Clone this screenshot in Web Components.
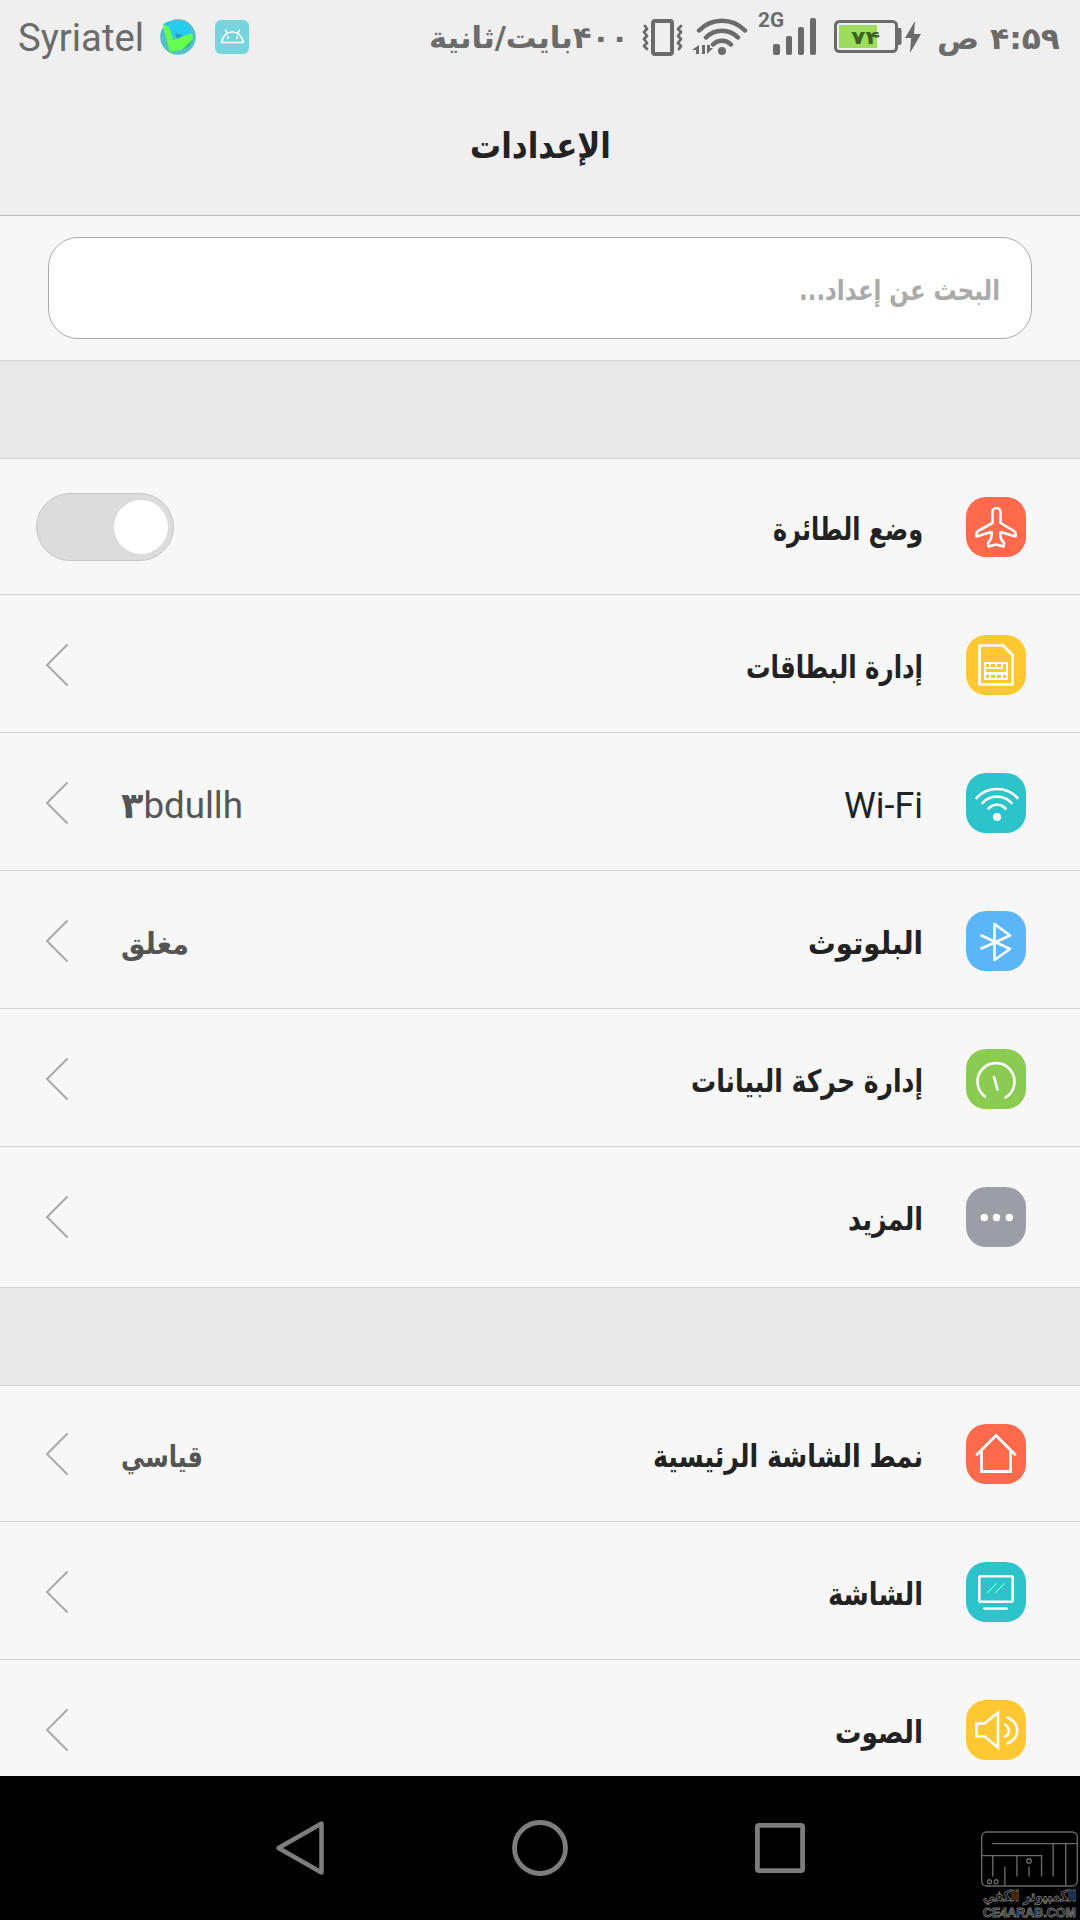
<!DOCTYPE html>
<html lang="ar">
<head>
<meta charset="utf-8">
<title>الإعدادات</title>
<style>
html,body{margin:0;padding:0}
body{width:1080px;height:1920px;overflow:hidden;background:#f7f7f7;font-family:"DejaVu Sans","Roboto",sans-serif;color:#222}
</style>
</head>
<body>
<settings-app></settings-app>
<script>
const define = (name, html, setup) => {
  const t = document.createElement('template');
  t.innerHTML = html;
  customElements.define(name, class extends HTMLElement {
    connectedCallback() {
      if (this.shadowRoot) return;
      this.attachShadow({mode: 'open'}).append(t.content.cloneNode(true));
      if (setup) setup(this, this.shadowRoot);
    }
  });
};

/* Text squeezed or stretched to a set width, as a condensed face would be */
define('fit-text', `<style>
:host{display:block;flex:none;white-space:nowrap;line-height:1.2}
span{display:inline-block;transform-origin:0 50%}
</style><span><slot></slot></span>`, (el, root) => {
  const w = +el.getAttribute('w'), s = root.querySelector('span');
  el.style.width = w + 'px';
  el.style.direction = 'ltr';
  s.style.direction = el.getAttribute('dir') || 'rtl';
  s.style.transform = 'scaleX(' + w / s.getBoundingClientRect().width + ')';
});

const W = 'fill="none" stroke="#fff" stroke-width="2.6" stroke-linecap="round" stroke-linejoin="round"';
const ICONS = {
  plane: ['#ff6a4d', `<path ${W} d="M30 11c-2 0-3.500 2-3.500 4v11L12 34c-1.500 1-2 3-1.500 5.500l15-4.500c.5 5 0 8-3.500 10.500l.5 4 7.500-2 7.500 2 .5-4c-3.500-2.500-4-5.500-3.500-10.500l15 4.500c.5-2.500 0-4.500-1.500-5.500L34.500 26V15c0-2-1.500-4-4.500-4z"/>`],
  sim: ['#ffc732', `<path fill="none" stroke="#fff" stroke-width="2.700" stroke-linejoin="round" d="M13.500 10.500H37l9.500 9.500v29.500h-33z"/><path fill="#fff" d="M18 27h24v18H18z"/><path fill="#ffc732" d="M20 29h3v3h-3zm5 0h4v3h-4zm6 0h4v3h-4zm6 0h3v8H20v-3h17zM20 40h3v3h-3zm5 0h4v3h-4zm6 0h4v3h-4zm6 0h3v3h-3z"/>`],
  wifi: ['#2cc3cb', `<g ${W}><path d="M10.500 25C21 13 41 13 51.500 25M16.500 30C24 21.500 38 21.500 45.500 30M22.500 35.500c5-5 12-5 17 0"/></g><circle cx="31" cy="44" r="4" fill="#fff"/>`],
  bluetooth: ['#5bb6f8', `<path ${W} d="M15.500 24.500 44 38 28.500 49V13L44 24.500 15.500 37.500"/>`],
  data: ['#8acc52', `<path ${W} d="M19 47.500a18.500 18.500 0 1 1 20.500 1M28 28l3.500 12.500"/>`],
  more: ['#9d9da5', `<g fill="#fff"><circle cx="18.300" cy="30.500" r="3.700"/><circle cx="30.500" cy="30.500" r="3.700"/><circle cx="43.300" cy="30.500" r="3.700"/></g>`],
  home: ['#ff6a4d', `<path fill="none" stroke="#fff" stroke-width="2.800" stroke-linecap="round" d="M11 30.500 30 11.500l19 19M15.500 27v20.500h29V27"/>`],
  screen: ['#2cc3cb', `<rect x="13.300" y="14.300" width="33.400" height="25.400" rx="1.500" ${W}/><path ${W} d="M18.500 46.500h22"/><path stroke="#fff" stroke-width="1" d="M21 31l10-10M29 31l10-10"/>`],
  sound: ['#ffc732', `<g ${W}><path stroke-linejoin="miter" d="M10.500 23.500h8L32 12.500v35L18.500 36.500h-8z"/><path d="M39 24.500c5 3 5 10 0 12M41.500 17.500c13 6 13 20 0 26"/></g>`]
};
define('app-icon', `<style>
:host{display:block;flex:none;width:60px;height:60px;border-radius:20px;overflow:hidden}
svg{display:block}
</style><svg width="60" height="60" viewBox="0 0 60 60"></svg>`, (el, root) => {
  const [bg, art] = ICONS[el.getAttribute('name')];
  el.style.background = bg;
  root.querySelector('svg').innerHTML = art;
});

define('toggle-switch', `<style>
:host{display:flex;flex:none;box-sizing:border-box;width:138px;height:68px;border:1px solid #c6c6c6;border-radius:34px;background:#dcdcdc;align-items:center;justify-content:flex-end;direction:ltr;padding-right:5px}
i{width:54px;height:54px;border-radius:50%;background:#fff}
</style><i></i>`);

define('chevron-mark', `<style>:host{display:block;flex:none}svg{display:block}</style>
<svg width="24" height="44" viewBox="0 0 24 44"><path fill="none" stroke="#aaa" stroke-width="2" d="M22.500 1.500 2 22l20.500 20.500"/></svg>`);

define('setting-row', `<style>
:host{display:flex;direction:rtl;box-sizing:border-box;height:138px;padding:3px 54px 0 45px;align-items:center;border-bottom:1px solid #d4d4d4;background:#f7f7f7}
:host([first]){height:136px;padding-top:2px;padding-bottom:1px}
:host([last]){height:141px;padding-top:1px;padding-bottom:1px}
.label{margin-right:43px;flex:1}
.value{margin-left:52px;color:#555}
</style><div class="label"><slot></slot></div><div class="value"><slot name="value"></slot></div><slot name="end"><chevron-mark></chevron-mark></slot>`,
(el, root) => {
  const icon = document.createElement('app-icon');
  icon.setAttribute('name', el.getAttribute('icon'));
  root.querySelector('.label').before(icon);
});

define('status-bar', `<style>
:host{display:flex;height:74px;box-sizing:border-box;padding:0 20px 0 18px;align-items:center;color:#6b6b6b}
svg{display:block;flex:none}
.gap{flex:1}
.carrier{font:38px/44px Roboto;padding-top:1px}
.speed{font-size:30px;font-weight:bold;margin-right:13px;padding-top:2px}
.time{font-size:30px;font-weight:bold;padding-top:3px}
.net{width:60px;height:74px;margin:0 17px 0 9px;display:grid}
.net>*{grid-area:1/1}
.net fit-text{font:bold 20px/20px Roboto;padding:10px 0 0 1px}
.bat{display:grid;margin-right:2px;align-items:center}
.bat>*{grid-area:1/1}
.bat fit-text{font-size:19px;font-weight:bold;color:#3c6420;margin-left:17px;padding-top:1px}
</style>
<fit-text class="carrier" w="126" dir="ltr">Syriatel</fit-text>
<svg width="36" height="36" viewBox="0 0 36 36" style="margin-left:16px"><circle cx="18" cy="18" r="17.800" fill="#54bfca"/><path fill="#25ccf0" d="M3 5 8 2.500 26 2.500l6.500 12.500-9 2-8-3-4 9z"/><path fill="#66ff4f" d="M2.500 5 9 8l4.500 13 18.500-7 1 7-11 10-12 1.500z"/><path fill="#28bc86" d="m33 20-3 7-8 4z"/><path fill="#249aca" d="m15 14 8 2-6 4z"/></svg>
<svg width="34" height="34" viewBox="0 0 34 34" style="margin-left:19px"><rect width="34" height="34" rx="6" fill="#76d5dc"/><path fill="none" stroke="#fff" stroke-width="1.500" stroke-linejoin="round" stroke-linecap="round" d="M6.500 22.500c2-14 19-14 22 0zM12 13l-1.500-3M23 13l1.500-3"/><path fill="#fff" d="M12 16h2v3h-2zm9 0h2v3h-2z"/></svg>
<div class="gap"></div>
<fit-text class="speed" w="200">۴۰۰بايت/ثانية</fit-text>
<svg width="42" height="37" viewBox="0 0 42 37"><rect x="11" y="2" width="19" height="33" rx="2" fill="none" stroke="#6b6b6b" stroke-width="4"/><path fill="none" stroke="#6b6b6b" stroke-width="2.800" stroke-linejoin="round" stroke-linecap="round" d="M3 7l2 3-3 3 3 4-3 3 3 4-3 3 3 3M39 7l-3 3 3 3-3 4 3 3-3 4 3 3-2 3"/></svg>
<svg width="56" height="38" viewBox="0 0 56 38" style="margin-left:8px"><g fill="none" stroke="#6b6b6b" stroke-width="4.500" stroke-linecap="round"><path d="M7 12.500c13-13 33-13 46 0M14 19.500c9-9 23-9 32 0M21 26.500c5-5 13-5 18 0"/></g><circle cx="30" cy="33" r="4" fill="#6b6b6b"/><path fill="#6b6b6b" d="M0 32l7-5v9H4v-4zm10-5v9h3v-9h-3zm5-0v9l6-6h-3v-3z"/></svg>
<div class="net"><fit-text w="26" dir="ltr">2G</fit-text><svg width="60" height="74" viewBox="0 0 60 74"><g fill="#6b6b6b"><rect x="16" y="44" width="7" height="11" rx="2"/><rect x="29" y="36" width="6" height="19" rx="2"/><rect x="41" y="27" width="6" height="28" rx="2"/><rect x="53" y="18" width="6" height="37" rx="2"/></g></svg></div>
<div class="bat"><svg width="68" height="34" viewBox="0 0 68 34"><path fill="#9ddc5c" d="M5 5h38v23H5z"/><rect x="1.500" y="1.500" width="61" height="30" rx="4" fill="none" stroke="#6b6b6b" stroke-width="3"/><path fill="#6b6b6b" d="M63 8h3q1.500 0 1.500 2v13q0 2-1.500 2h-3z"/></svg><fit-text w="29">۷۴</fit-text></div>
<svg width="18" height="34" viewBox="0 0 18 34"><path fill="#6b6b6b" d="M11 1 1 18h6l-1 15L17 14h-7z"/></svg>
<fit-text class="time" w="123" style="margin-left:15px">۴:۵۹ ص</fit-text>`);

define('title-bar', `<style>
:host{display:flex;flex:1;justify-content:center;align-items:flex-start;padding-top:50px;font-size:36px;font-weight:bold}
</style><slot></slot>`);

define('search-box', `<style>
:host{display:flex;height:145px;box-sizing:border-box;align-items:center;padding:0 48px 1px;border-bottom:1px solid #d4d4d4;background:#f7f7f7}
div{box-sizing:border-box;height:102px;flex:1;border:1px solid #aaa;border-radius:30px;background:#fff;display:flex;direction:rtl;align-items:center;padding:7px 31px 0;color:#aaa;font-size:28px;font-weight:bold}
</style><div><slot></slot></div>`);

define('nav-bar', `<style>
:host{display:flex;position:relative;flex:none;height:144px;background:#000}
.keys{display:flex;flex:1;align-items:center;justify-content:space-between;padding:0 275px 0 275px}
svg{display:block}
.mark{position:absolute;right:0;bottom:0;width:101px;height:89px;display:flex;flex-direction:column;align-items:center;overflow:hidden}
.mark fit-text{color:#000;-webkit-text-stroke:1px #707070;font-weight:bold}
.a{font-size:15px;line-height:18px!important;height:18px}
.b{font:bold 13px/15px "Liberation Sans";height:15px}
</style>
<div class="keys">
<svg width="50" height="56" viewBox="0 0 50 56"><path fill="none" stroke="#7d7d7d" stroke-width="4.500" stroke-linejoin="round" d="M46.500 3.500v49L3.500 28z"/></svg>
<svg width="56" height="56" viewBox="0 0 56 56"><circle cx="28" cy="28" r="25.500" fill="none" stroke="#7d7d7d" stroke-width="4.800"/></svg>
<svg width="50" height="50" viewBox="0 0 50 50"><rect x="2.400" y="2.400" width="45.200" height="45.200" rx="1.500" fill="none" stroke="#7d7d7d" stroke-width="4.800"/></svg>
</div>
<div class="mark"><svg width="101" height="58" viewBox="0 0 101 58"><g fill="none" stroke="#6a6a6a" stroke-width="1.400"><rect x="1" y="1" width="99" height="56" rx="5"/><path d="M12 13h88M88 13v43M75 13v34M1 25.500h62V47M12.500 26v21M25 37v19M37.500 26v21M50 37v10"/><circle cx="50" cy="31" r="2.300"/><circle cx="9" cy="52.500" r="2"/><circle cx="16" cy="52.500" r="2"/></g></svg>
<fit-text class="a" w="93">الكمبيوتر الكفي</fit-text><fit-text class="b" w="93" dir="ltr">CE4ARAB.COM</fit-text></div>`);

define('settings-app', `<style>
:host{display:flex;flex-direction:column;width:1080px;height:1920px;background:#f7f7f7}
header{display:flex;flex-direction:column;height:216px;box-sizing:border-box;flex:none;background:#efefef;border-bottom:1px solid #bcbcbc}
main{height:1560px;flex:none;overflow:hidden}
.sep{height:98px;box-sizing:border-box;background:#e9e9e9;border-bottom:1px solid #d4d4d4}
.g{font-size:31px;font-weight:bold}
.g fit-text{padding-top:5px}
.g .lat{font:36px/44px Roboto;padding-top:5px}
.lat b{font:bold 36px/0 "DejaVu Sans"}
[slot=value]{font-size:30px}
</style>
<header><status-bar></status-bar><title-bar><fit-text w="141">الإعدادات</fit-text></title-bar></header>
<main>
<search-box><fit-text w="201">البحث عن إعداد...</fit-text></search-box>
<div class="sep"></div>
<div class="g">
<setting-row first icon="plane"><fit-text w="150">وضع الطائرة</fit-text><toggle-switch slot="end" style="margin:0 0 0 -9px"></toggle-switch></setting-row>
<setting-row icon="sim"><fit-text w="177">إدارة البطاقات</fit-text></setting-row>
<setting-row icon="wifi"><fit-text class="lat" w="79" dir="ltr">Wi-Fi</fit-text><fit-text class="lat" slot="value" w="122" dir="ltr"><b>۳</b>bdullh</fit-text></setting-row>
<setting-row icon="bluetooth"><fit-text w="115">البلوتوث</fit-text><fit-text slot="value" w="68">مغلق</fit-text></setting-row>
<setting-row icon="data"><fit-text w="232">إدارة حركة البيانات</fit-text></setting-row>
<setting-row last icon="more"><fit-text w="75">المزيد</fit-text></setting-row>
</div>
<div class="sep"></div>
<div class="g">
<setting-row first icon="home"><fit-text w="270">نمط الشاشة الرئيسية</fit-text><fit-text slot="value" w="82">قياسي</fit-text></setting-row>
<setting-row icon="screen"><fit-text w="95">الشاشة</fit-text></setting-row>
<setting-row icon="sound"><fit-text w="88">الصوت</fit-text></setting-row>
</div>
</main>
<nav-bar></nav-bar>`);
</script>
</body>
</html>
